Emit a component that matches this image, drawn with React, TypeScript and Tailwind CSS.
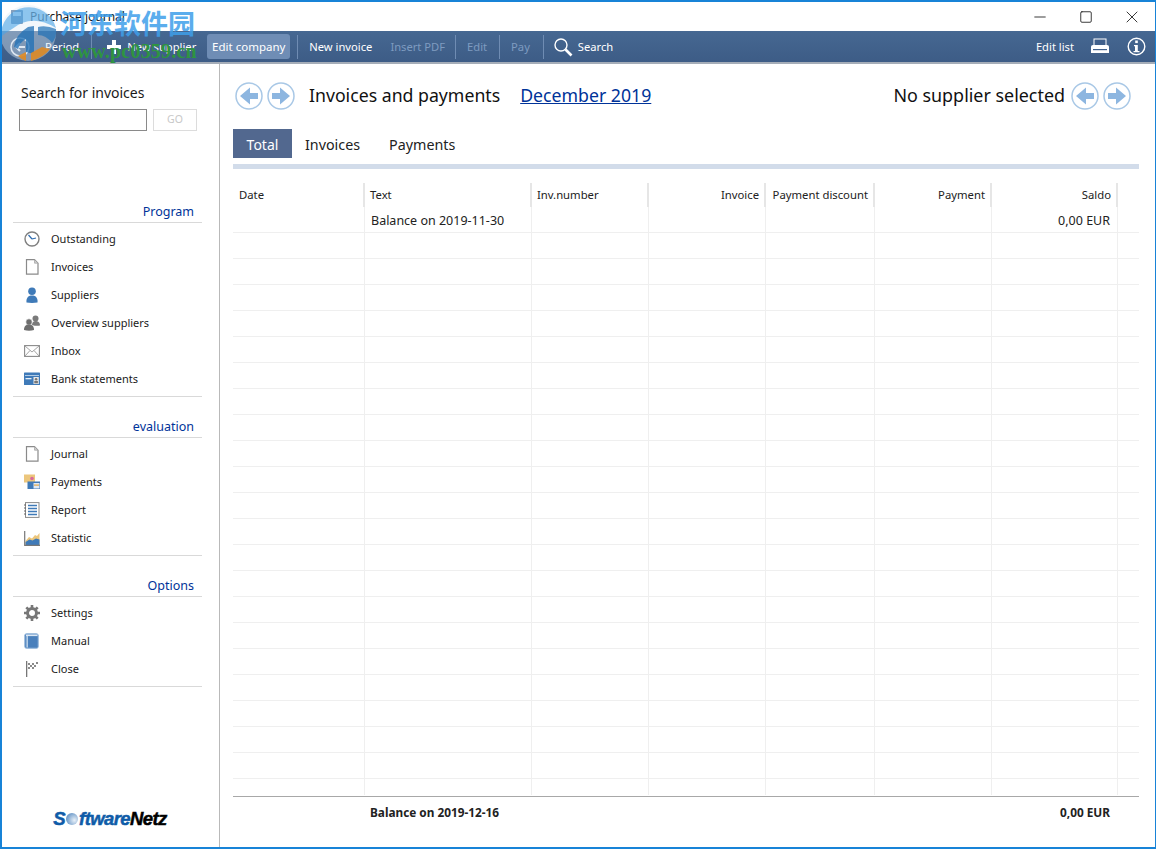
import { Minus, Square, X } from "lucide-react";

const HEAD_COLS = "grid grid-cols-[132px_167px_117px_117px_109px_117px_126px_21px]";
const UI_FONT = "font-['Noto_Sans','Open_Sans',sans-serif]";

function Arrow({ dir }: { dir: "left" | "right" }) {
  return (
    <svg width="28" height="28" viewBox="0 0 28 28">
      <circle cx="14" cy="14" r="13" fill="#fff" stroke="#a9c8e6" strokeWidth="1.500" />
      <path
        d={dir === "left" ? "M23 11h-8V5.500L5 14l10 8.500V17h8z" : "M5 11h8V5.500L23 14l-10 8.500V17H5z"}
        fill="#8db6e0"
      />
    </svg>
  );
}

const ICONS: Record<string, React.ReactNode> = {
  clock: (
    <>
      <circle cx="8" cy="8" r="7" fill="#fff" stroke="#7f7f7f" strokeWidth="1.400" />
      <path d="M8 8 4.500 4M8 8l4-1" stroke="#2f6cb0" strokeWidth="1.200" fill="none" />
    </>
  ),
  page: (
    <>
      <path d="M2.500.7h8l3.500 3.500v11h-11.500z" fill="#fff" stroke="#8a8a8a" strokeWidth="1.200" />
      <path d="M10.500.7v3.500H14" fill="#ccc" stroke="#aaa" strokeWidth=".8" />
    </>
  ),
  user: (
    <>
      <circle cx="8" cy="4.300" r="3.800" fill="#3f7ab8" />
      <path d="M2.500 15.500c-.5-5 2-7 5.500-7s6 2 5.500 7c-3 .6-8 .6-11 0z" fill="#3f7ab8" />
    </>
  ),
  users: (
    <>
      <circle cx="11.500" cy="3.500" r="3" fill="#7a7a7a" />
      <path d="M8 10c0-3 1.500-4 3.500-4S16 7 16 10.500c-2 .6-5 .5-8-.5z" fill="#7a7a7a" />
      <circle cx="5" cy="7" r="3.200" fill="#6e6e6e" stroke="#fff" strokeWidth=".6" />
      <path d="M0 15c0-4 2-5.500 5-5.500s5 1.500 5 5.500c-3 1-7 1-10 0z" fill="#6e6e6e" />
    </>
  ),
  mail: (
    <>
      <rect x=".6" y="2.600" width="14.800" height="10.800" fill="#fff" stroke="#8a8a8a" strokeWidth="1.100" />
      <path d="M1 3l7 6 7-6M1 13l5-5.500M15 13l-5-5.500" fill="none" stroke="#9a9a9a" strokeWidth=".9" />
    </>
  ),
  bank: (
    <>
      <rect x="0" y="1.500" width="16" height="12.500" rx=".6" fill="#3f7ab8" />
      <rect x="1" y="4" width="14" height=".8" fill="#cfe0f0" />
      <rect x="9.500" y="6" width="5.300" height="7" fill="#e8e8e8" />
      <circle cx="12.100" cy="8.300" r="1.300" fill="#777" />
      <rect x="10.300" y="10" width="3.600" height="2.300" fill="#777" />
      <rect x="1.500" y="7" width="6" height="1.300" fill="#e8f0f8" />
    </>
  ),
  payments: (
    <>
      <rect x="0" y="0.500" width="11" height="8" fill="#ecc67c" />
      <circle cx="8" cy="4.500" r="1.800" fill="#d96a9c" />
      <rect x="3.500" y="7.500" width="12.500" height="7.500" fill="#3f7ab8" />
      <rect x="9.500" y="9" width="6" height="5.500" fill="#dfe9f4" />
      <rect x="10" y="10.500" width="5" height="1.200" fill="#e0a94c" />
    </>
  ),
  report: (
    <>
      <rect x="1.500" y=".6" width="13.500" height="14.800" fill="#fff" stroke="#8a8a8a" />
      <path d="M4 3.500h9M4 6.500h9M4 9.500h9M4 12.500h9" stroke="#3f7ab8" strokeWidth="1.500" />
      <path d="M0 3h2M0 6h2M0 9h2M0 12h2" stroke="#666" />
    </>
  ),
  chart: (
    <>
      <path d="M1.500 11 5 7l3 1.500L11 5l2 1 2.500-3v12H1.500z" fill="#ecc67c" />
      <path d="M1.500 15V12l4-2.500 3 1 3.500-2 3.500 1V15z" fill="#3f7ab8" />
      <path d="M.7 1v14.300H16" fill="none" stroke="#777" strokeWidth="1.200" />
    </>
  ),
  gear: (
    <>
      <circle cx="8" cy="8" r="4.500" fill="none" stroke="#777" strokeWidth="3" />
      <path
        d="M8 0v3M8 13v3M0 8h3M13 8h3M2.300 2.300l2.200 2.200M11.500 11.500l2.200 2.200M13.700 2.300l-2.200 2.200M4.500 11.500l-2.200 2.200"
        stroke="#777"
        strokeWidth="2.600"
      />
    </>
  ),
  book: (
    <>
      <rect x=".8" y=".8" width="13.400" height="14.400" rx="1.500" fill="#4a80bc" stroke="#8fb2d8" />
      <rect x="2" y="1.500" width="11.500" height="1.600" fill="#dbe7f3" />
      <rect x="2.500" y="3" width="1.300" height="11.500" fill="#cfe0f0" />
    </>
  ),
  flag: (
    <>
      <rect x="2" y="0" width="1.300" height="16" fill="#777" />
      <path d="M4 2h2v2H4zM8 2h2v2H8zM12 1h2v2h-2zM6 4h2v2H6zM10 4h2v2h-2zM4 6h2v2H4zM8 6h2v2H8z" fill="#8a8a8a" />
    </>
  ),
};

function NavSection({
  title,
  items,
  className,
}: {
  title: string;
  items: { icon: string; label: string }[];
  className: string;
}) {
  return (
    <div className={className}>
      <div className="h-[22px] pr-[8px] text-right text-[12.500px] leading-[24px] text-[#003399]">{title}</div>
      <div className="border-y border-[#d9d9d9] pt-[2px] pb-[3px]">
        {items.map((item) => (
          <div key={item.label} className="flex h-[28px] items-center">
            <svg width="16" height="16" viewBox="0 0 16 16" className="ml-[11px] mr-[11px] shrink-0">
              {ICONS[item.icon]}
            </svg>
            <span className="text-[11px] text-[#1a1a1a]">{item.label}</span>
          </div>
        ))}
      </div>
    </div>
  );
}

function ToolItem({ label, dim }: { label: string; dim?: boolean }) {
  return (
    <span className={`px-[5px] text-[11.200px] leading-[25px] ${dim ? "text-[#7e9bc0]" : "text-white"}`}>
      {label}
    </span>
  );
}

function Sep({ className = "" }: { className?: string }) {
  return <span className={`h-[24px] w-px bg-[#6f8cb3] ${className}`} />;
}

function HeadCell({ label, right }: { label: string; right?: boolean }) {
  return (
    <div
      className={`h-[24px] whitespace-nowrap border-r-2 border-[#e6e6e6] px-[5px] text-[11.300px] leading-[24px] text-[#222] first:pl-[6px] ${
        right ? "text-right" : ""
      }`}
    >
      {label}
    </div>
  );
}

const ROWS = Array.from({ length: 22 }, (_, i) => i);

export default function App() {
  return (
    <div
      className={`relative flex h-[849px] w-[1156px] flex-col overflow-hidden border-2 border-r border-[#1883d7] bg-white ${UI_FONT}`}
    >
      {/* title bar */}
      <div className="flex h-[29px] shrink-0 items-center">
        <svg width="14" height="16" viewBox="0 0 14 16" className="ml-[8px] mr-[6px]">
          <rect x="1" y="1" width="12" height="14" rx="1" fill="#4a6f98" />
          <rect x="3" y="3" width="8" height="4" fill="#dbe7f3" />
        </svg>
        <span className="text-[12px] text-[#111]">Purchase journal</span>
        <div className="ml-auto flex items-center text-[#111]">
          <span className="flex w-[46px] justify-center">
            <Minus size={18} strokeWidth={1.100} />
          </span>
          <span className="flex w-[46px] justify-center">
            <Square size={14} strokeWidth={1.400} />
          </span>
          <span className="flex w-[46px] justify-center">
            <X size={20} strokeWidth={1} />
          </span>
        </div>
      </div>

      {/* toolbar */}
      <div className="flex h-[33px] shrink-0 items-center border-b-2 border-[#a5adb8] bg-[#40608b] bg-gradient-to-b from-[#466892] to-[#3d5c86] text-white">
        <svg width="24" height="24" viewBox="0 0 24 24" className="ml-[6px] mr-[8px]">
          <circle cx="12" cy="12" r="9" fill="none" stroke="#dfe7f1" strokeWidth="1.500" />
          <path d="M17 12H9M12 8l-4 4 4 4" fill="none" stroke="#dfe7f1" strokeWidth="2" />
        </svg>
        <ToolItem label="Period" />
        <Sep className="ml-[7px] mr-[15px]" />
        <svg width="14" height="14" viewBox="0 0 14 14" className="mr-[1px]">
          <path d="M5 0h4v5h5v4H9v5H5V9H0V5h5z" fill="#fff" />
        </svg>
        <ToolItem label="New supplier" />
        <span className="w-[6px]" />
        <span className="w-[83px] rounded-[3px] bg-[#6f8db5] py-[3px] text-center text-[11.500px] leading-[19px] text-white">
          Edit company
        </span>
        <Sep className="ml-[7px] mr-[6px]" />
        <ToolItem label="New invoice" />
        <span className="w-[8px]" />
        <ToolItem label="Insert PDF" dim />
        <Sep className="ml-[5px] mr-[6px]" />
        <ToolItem label="Edit" dim />
        <Sep className="ml-[7px] mr-[6px]" />
        <ToolItem label="Pay" dim />
        <Sep className="ml-[8px] mr-[9px]" />
        <svg width="20" height="20" viewBox="0 0 20 20">
          <circle cx="8" cy="8" r="6" fill="none" stroke="#fff" strokeWidth="1.400" />
          <path d="m12.500 12.500 6 6" stroke="#fff" strokeWidth="2.600" />
        </svg>
        <ToolItem label="Search" />
        <div className="ml-auto mr-[9px] flex items-center">
          <ToolItem label="Edit list" />
          <svg width="20" height="18" viewBox="0 0 20 18" className="ml-[11px] mr-[17px]">
            <rect x="4" y="1" width="12" height="7" fill="#40608b" stroke="#fff" />
            <path d="M1 8.500Q1 7 3 7h14q2 0 2 1.500V15H1z" fill="#fff" />
            <rect x="3" y="11" width="14" height="1.200" fill="#40608b" />
          </svg>
          <svg width="19" height="19" viewBox="0 0 19 19">
            <circle cx="9.500" cy="9.500" r="8.300" fill="none" stroke="#fff" strokeWidth="1.400" />
            <rect x="8.200" y="3.500" width="2.600" height="2.600" fill="#fff" />
            <path d="M7 8h3.800v6H12.500v1.300h-6V14h1.500V9.300H7z" fill="#fff" />
          </svg>
        </div>
      </div>

      <div className="flex min-h-0 flex-1">
        {/* sidebar */}
        <aside className="flex w-[218px] shrink-0 flex-col border-r border-[#b9b9b9] pl-[11px] pr-[17px]">
          <div className="ml-[8px] mt-[19px] text-[14px] leading-[20px] text-[#1a1a1a]">Search for invoices</div>
          <div className="ml-[6px] mt-[6px] flex gap-[6px]">
            <div className="h-[22px] w-[128px] border border-[#8a8a8a]" />
            <div className="flex h-[22px] w-[44px] items-center justify-center border border-[#dcdcdc] text-[10.500px] text-[#c8c8c8]">
              GO
            </div>
          </div>
          <NavSection
            className="mt-[69px]"
            title="Program"
            items={[
              { icon: "clock", label: "Outstanding" },
              { icon: "page", label: "Invoices" },
              { icon: "user", label: "Suppliers" },
              { icon: "users", label: "Overview suppliers" },
              { icon: "mail", label: "Inbox" },
              { icon: "bank", label: "Bank statements" },
            ]}
          />
          <NavSection
            className="mt-[18px]"
            title="evaluation"
            items={[
              { icon: "page", label: "Journal" },
              { icon: "payments", label: "Payments" },
              { icon: "report", label: "Report" },
              { icon: "chart", label: "Statistic" },
            ]}
          />
          <NavSection
            className="mt-[18px]"
            title="Options"
            items={[
              { icon: "gear", label: "Settings" },
              { icon: "book", label: "Manual" },
              { icon: "flag", label: "Close" },
            ]}
          />
          <div className="mt-auto mb-[17px] flex items-center justify-center pl-[5px] font-['Liberation_Sans',sans-serif] text-[18.500px] font-bold italic leading-[22px] tracking-[-0.6px] [-webkit-text-stroke:0.5px]">
            <span className="text-[#0f5ca8]">S</span>
            <span className="mx-[1px] h-[12px] w-[12px] rounded-full bg-[radial-gradient(circle_at_70%_60%,#e8f0f8,#3f7ab8)]" />
            <span className="text-[#0f5ca8]">ftware</span>
            <span className="text-black">Netz</span>
          </div>
        </aside>

        {/* main */}
        <main className="flex min-w-0 flex-1 flex-col pl-[13px] pr-[16px]">
          <div className="flex h-[65px] shrink-0 items-center pb-[2px]">
            <div className="ml-[2px] flex gap-[4px]">
              <Arrow dir="left" />
              <Arrow dir="right" />
            </div>
            <span className="ml-[14px] text-[17.700px] text-[#111]">Invoices and payments</span>
            <span className="ml-[20px] text-[17.700px] text-[#003399] underline">December 2019</span>
            <span className="ml-auto mr-[6px] text-[17.900px] text-[#111]">No supplier selected</span>
            <div className="mr-[8px] flex gap-[4px]">
              <Arrow dir="left" />
              <Arrow dir="right" />
            </div>
          </div>

          <div className="flex h-[29px] shrink-0 items-center text-[14.300px] text-[#222]">
            <span className="flex h-full w-[59px] items-center justify-center bg-[#52688f] pt-[2px] text-[14px] text-white">
              Total
            </span>
            <span className="ml-[13px] pt-[2px]">Invoices</span>
            <span className="ml-[29px] pt-[2px]">Payments</span>
          </div>
          <div className="mt-[6px] h-[5px] shrink-0 bg-[#d2dcea]" />

          {/* table */}
          <div className="mt-[14px]">
            <div className={HEAD_COLS}>
              <HeadCell label="Date" />
              <HeadCell label="Text" />
              <HeadCell label="Inv.number" />
              <HeadCell label="Invoice" right />
              <HeadCell label="Payment discount" right />
              <HeadCell label="Payment" right />
              <HeadCell label="Saldo" right />
            </div>
            {ROWS.map((i) => (
              <div key={i} className={`${HEAD_COLS} h-[26px] border-b border-[#efefef]`}>
                <div className="border-r border-[#efefef]" />
                <div className="whitespace-nowrap border-r border-[#efefef] pl-[6px] text-[12.500px] leading-[28px] text-[#222]">
                  {i === 0 && "Balance on 2019-11-30"}
                </div>
                <div className="border-r border-[#efefef]" />
                <div className="border-r border-[#efefef]" />
                <div className="border-r border-[#efefef]" />
                <div className="border-r border-[#efefef]" />
                <div className="whitespace-nowrap border-r border-[#efefef] pr-[7px] text-right text-[12.500px] leading-[28px] text-[#222]">
                  {i === 0 && "0,00 EUR"}
                </div>
                <div />
              </div>
            ))}
            <div className={`${HEAD_COLS} h-[16px]`}>
              <div className="border-r border-[#efefef]" />
              <div className="border-r border-[#efefef]" />
              <div className="border-r border-[#efefef]" />
              <div className="border-r border-[#efefef]" />
              <div className="border-r border-[#efefef]" />
              <div className="border-r border-[#efefef]" />
              <div className="border-r border-[#efefef]" />
              <div />
            </div>
          </div>

          <div className="mt-[1px] flex h-[33px] items-center border-t border-[#a8a8a8] text-[11.800px] font-bold text-[#222]">
            <span className="ml-[137px]">Balance on 2019-12-16</span>
            <span className="ml-auto mr-[29px]">0,00 EUR</span>
          </div>
        </main>
      </div>

      {/* watermark overlay */}
      <div className="pointer-events-none absolute left-[-2px] top-[-2px]">
        <svg width="58" height="62" viewBox="0 0 58 62" className="absolute left-0 top-[3px]">
          <circle cx="28" cy="30" r="28" fill="#dfeaf4" opacity=".4" />
          <path d="M1 34A28 28 0 0 1 56 25Q32 10 12 26Q5 30 1 34z" fill="#4aa3e6" opacity=".6" />
          <path d="M14 44Q15 32 28 24l6-1v28l-8-2V36q-6 3-8 10z" fill="#1e6fb5" opacity=".75" />
          <path d="M38 24Q46 22 56 26Q57 34 52 40Q46 32 38 32z" fill="#1e6fb5" opacity=".7" />
          <path d="M18 53l8-4v9q-4-1-8-5zM31 50l11-6 8 2Q44 54 31 58z" fill="#d98a2b" opacity=".95" />
        </svg>
        <div className="absolute left-[60px] top-[5px] w-[150px] font-['Noto_Sans_CJK_SC',sans-serif] text-[27px] font-bold leading-[36px] text-[#3f9fea] opacity-85">
          河东软件园
        </div>
        <div className="absolute left-[62px] top-[41px] font-['Liberation_Serif',serif] text-[20px] font-bold leading-[20px] tracking-[0.2px] text-[#2e9440]">
          www.pc0359.cn
        </div>
      </div>
    </div>
  );
}
